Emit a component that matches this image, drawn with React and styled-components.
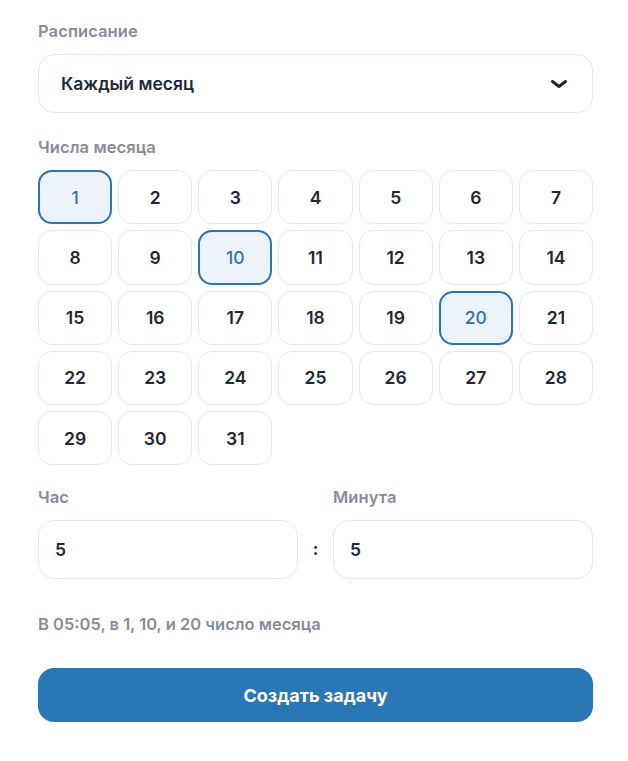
import { useState } from 'react';
import styled, { createGlobalStyle } from 'styled-components';

const GlobalStyle = createGlobalStyle`
    body {
        margin: 0;
        background: #ffffff;
        font-family: "Inter", "Noto Sans", sans-serif;
    }
`;

const days = Array.from({ length: 31 }, (_, i) => i + 1);

const App = () => {
    const [selected, setSelected] = useState([1, 10, 20]);
    const [hour, setHour] = useState('5');
    const [minute, setMinute] = useState('5');

    const toggle = (d) => {
        setSelected((s) => (s.includes(d) ? s.filter((x) => x !== d) : [...s, d].sort((a, b) => a - b)));
    };

    const pad = (v) => String(v).padStart(2, '0');
    const list = selected.length > 1
        ? selected.slice(0, -1).join(', ') + ', и ' + selected[selected.length - 1]
        : selected.join('');

    return (
        <>
            <GlobalStyle />
            <Form>
                <Field>
                    <Label>Расписание</Label>
                    <Select>
                        <span>Каждый месяц</span>
                        <svg width="18" height="12" viewBox="0 0 18 12" fill="none">
                            <path d="M2.5 3.5L9 8.5l6.5-5" stroke="#1b2a3a" strokeWidth="3" strokeLinecap="round" strokeLinejoin="round" />
                        </svg>
                    </Select>
                </Field>

                <Field $mt={24}>
                    <Label>Числа месяца</Label>
                    <DayGrid>
                        {days.map((d) => (
                            <Day key={d} $active={selected.includes(d)} onClick={() => toggle(d)}>
                                {d}
                            </Day>
                        ))}
                    </DayGrid>
                </Field>

                <TimeRow>
                    <Field>
                        <Label>Час</Label>
                        <Input value={hour} onChange={(e) => setHour(e.target.value)} />
                    </Field>
                    <Colon>:</Colon>
                    <Field>
                        <Label>Минута</Label>
                        <Input value={minute} onChange={(e) => setMinute(e.target.value)} />
                    </Field>
                </TimeRow>

                <Summary>
                    В {pad(hour)}:{pad(minute)}, в {list} число месяца
                </Summary>

                <Submit>Создать задачу</Submit>
            </Form>
        </>
    );
};

export default App;

const Form = styled.div`
    width: 555px;
    padding: 21px 38px 30px;
    display: flex;
    flex-direction: column;
`;

const Field = styled.div`
    display: flex;
    flex-direction: column;
    gap: 13px;
    margin-top: ${(p) => p.$mt || 0}px;
    flex: 1;
`;

const Label = styled.div`
    font-size: 16.5px;
    font-weight: 600;
    color: #878b9e;
    line-height: 20px;
    letter-spacing: 0.1px;
`;

const Select = styled.div`
    height: 59px;
    box-sizing: border-box;
    border: 1px solid #e6e8ef;
    border-radius: 16px;
    padding: 0 24px 0 22px;
    display: flex;
    align-items: center;
    justify-content: space-between;
    font-size: 17.5px;
    font-weight: 600;
    color: #1b2a3a;
    cursor: pointer;
`;

const DayGrid = styled.div`
    display: grid;
    grid-template-columns: repeat(7, 1fr);
    grid-auto-rows: 54.25px;
    gap: 6px;
`;

const Day = styled.button`
    box-sizing: border-box;
    border-radius: 14px;
    border: ${(p) => (p.$active ? '2px solid #2e74b0' : '1px solid #e6e8ef')};
    background: ${(p) => (p.$active ? '#ebf2fa' : '#ffffff')};
    color: ${(p) => (p.$active ? '#2e74b0' : '#1b2a3a')};
    font-family: inherit;
    font-size: 17.5px;
    font-weight: ${(p) => (p.$active ? 500 : 600)};
    cursor: pointer;
    padding: 0;
`;

const TimeRow = styled.div`
    display: flex;
    align-items: flex-end;
    margin-top: 22px;
`;

const Colon = styled.div`
    width: 35px;
    text-align: center;
    font-size: 17px;
    font-weight: 700;
    color: #1b2a3a;
    height: 59px;
    line-height: 59px;
`;

const Input = styled.input`
    height: 59px;
    box-sizing: border-box;
    border: 1px solid #e6e8ef;
    border-radius: 16px;
    padding: 0 16px;
    font-family: inherit;
    font-size: 17.5px;
    font-weight: 600;
    color: #1b2a3a;
    outline: none;
    width: 100%;
`;

const Summary = styled.div`
    font-size: 16.5px;
    font-weight: 600;
    color: #878b9e;
    margin-top: 35px;
    line-height: 20px;
`;

const Submit = styled.button`
    margin-top: 34px;
    height: 54px;
    border: none;
    border-radius: 16px;
    background: #2a77b6;
    color: #ffffff;
    font-family: inherit;
    font-size: 18px;
    font-weight: 700;
    cursor: pointer;
`;
